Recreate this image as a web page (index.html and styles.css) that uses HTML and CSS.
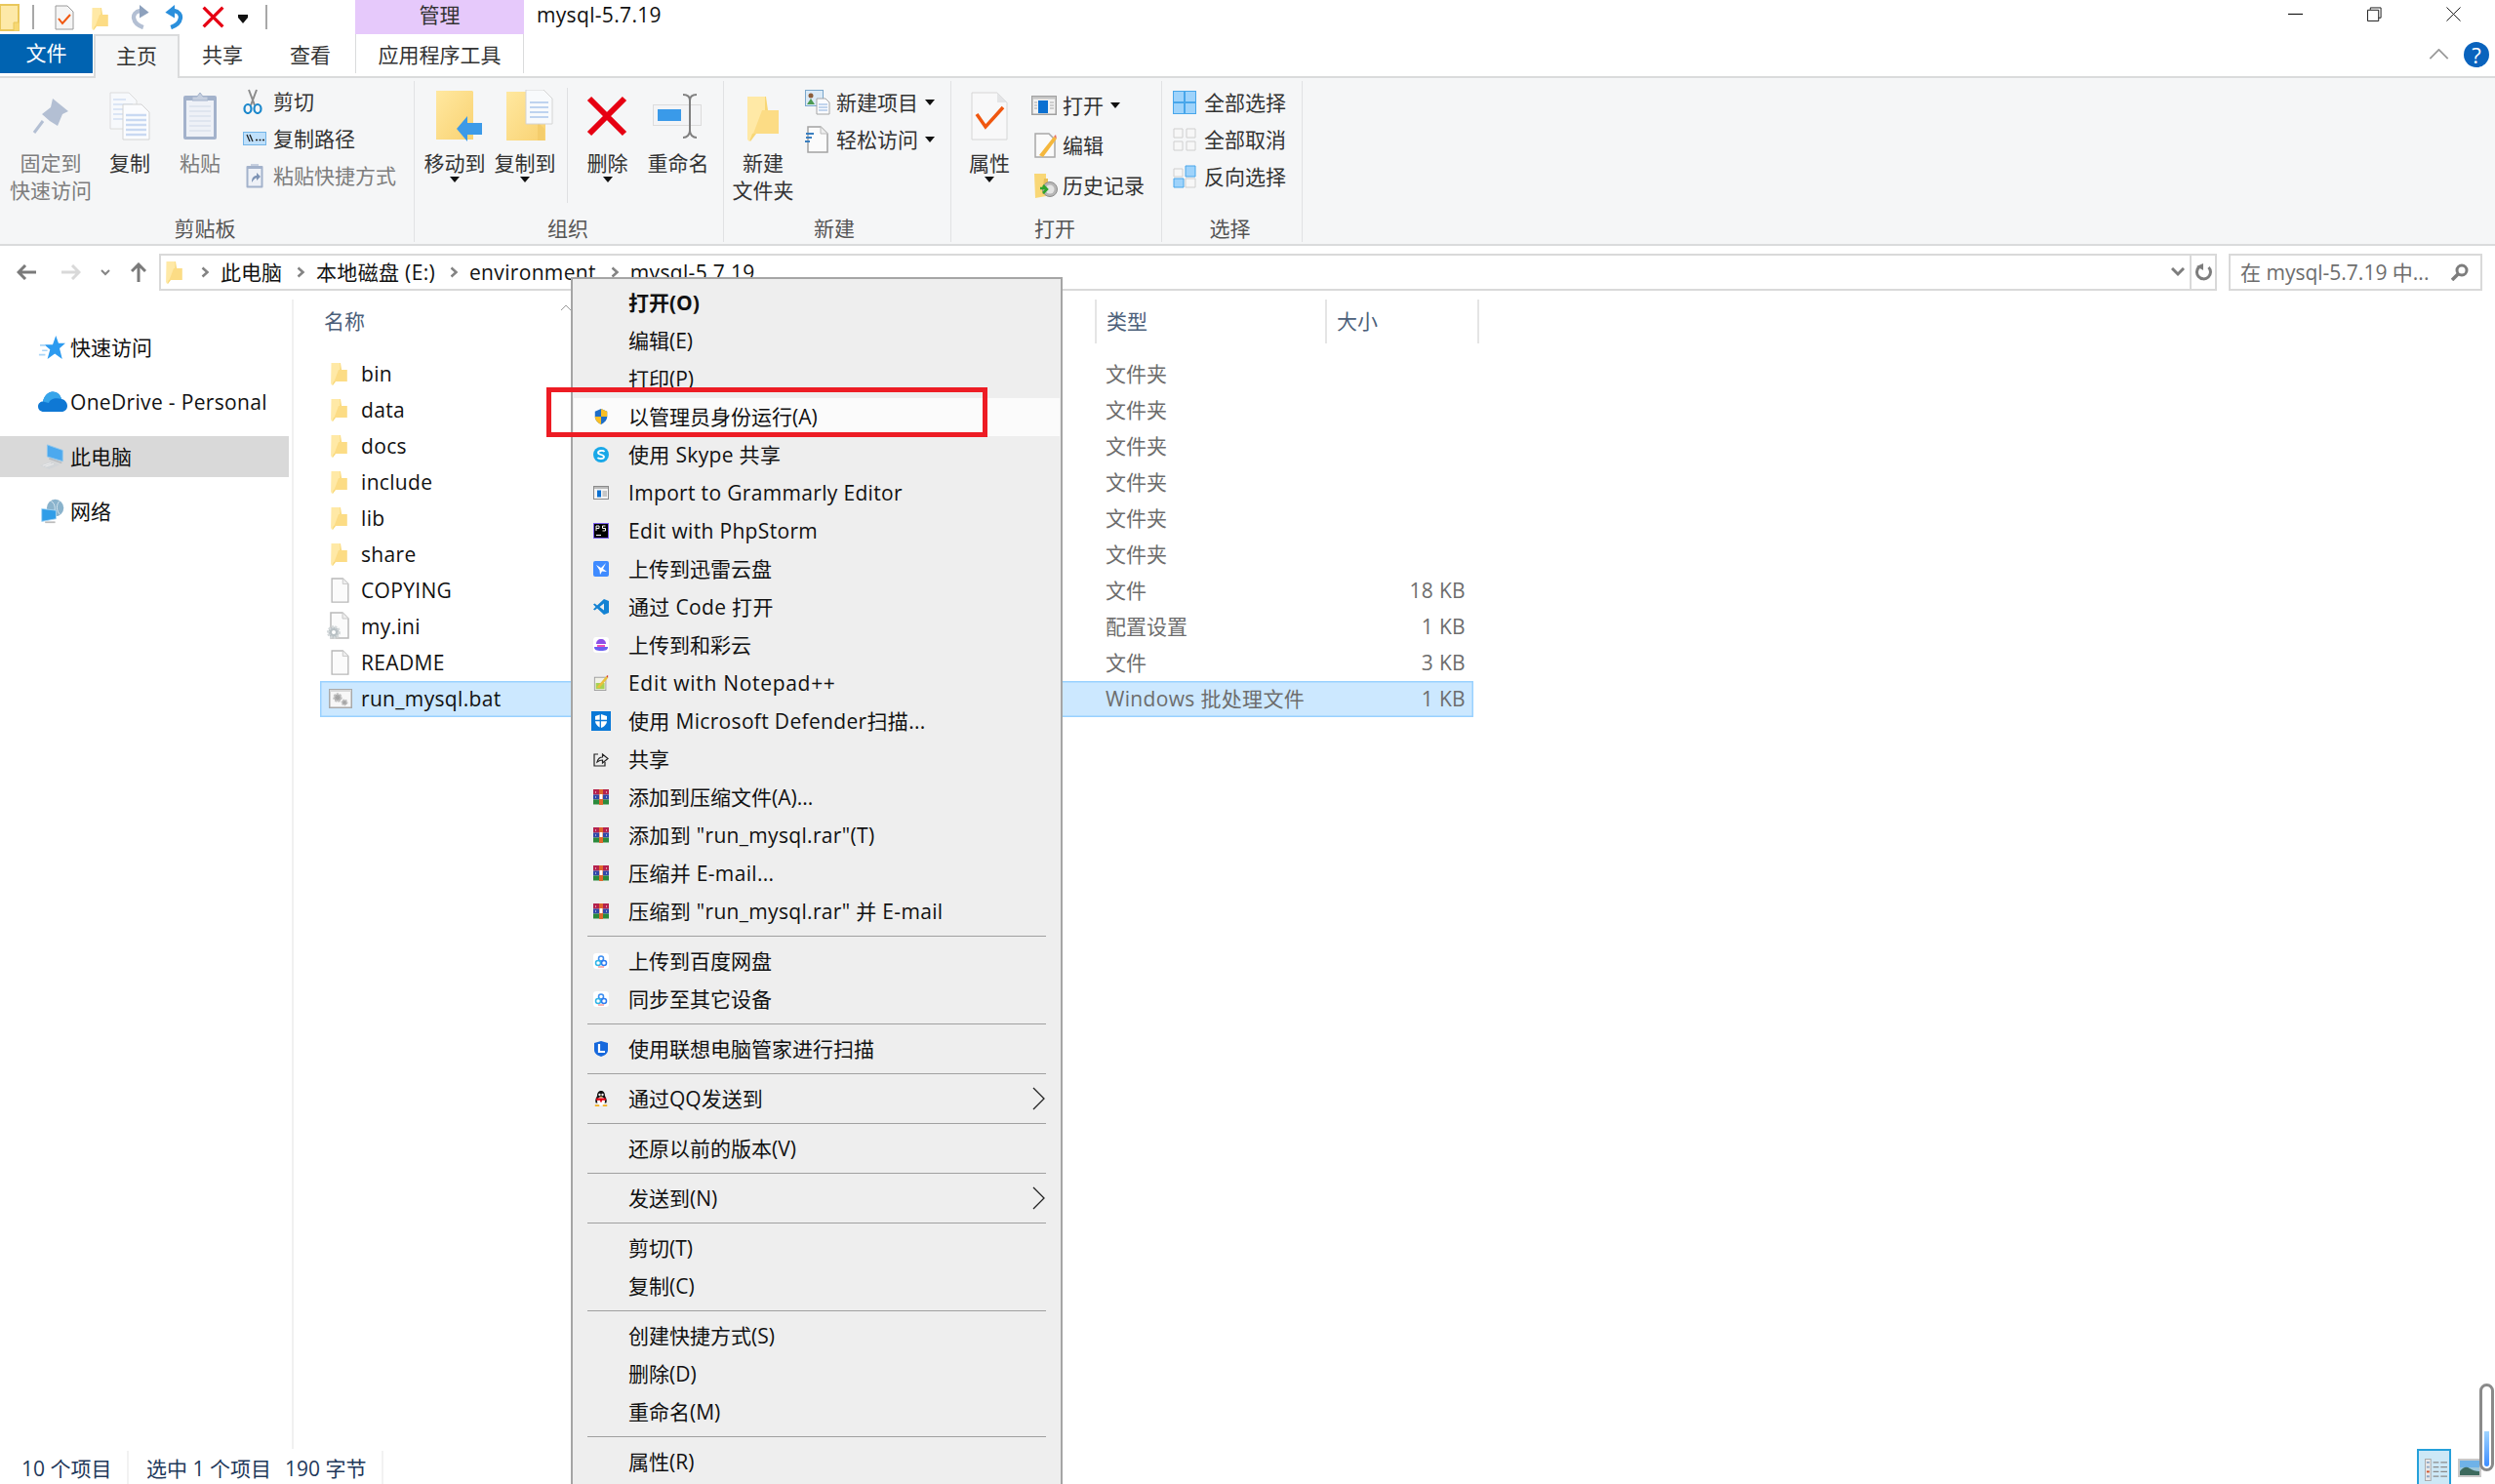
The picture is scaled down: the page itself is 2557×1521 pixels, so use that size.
FILE: index.html
```html
<!DOCTYPE html>
<html lang="zh-CN">
<head>
<meta charset="utf-8">
<title>mysql-5.7.19</title>
<link rel="stylesheet" href="styles.css">
</head>
<body>
<svg class="sprites" aria-hidden="true">
  <defs>
    <linearGradient id="fy" x1="0" y1="0" x2="1" y2="1"><stop offset="0" stop-color="#ffe8a0"/><stop offset="1" stop-color="#f9d272"/></linearGradient>
  </defs>
  <symbol id="folder" viewBox="0 0 17 24"><path d="M1 1H10L11 8H16.500V20H5L2 24 0.500 22Z" fill="#f8d775"/><path d="M0.500 1H9.500V18L3 20 1.500 24 0.500 23Z" fill="#ffe9a6"/><path d="M8 8H16.500V20H3.500Z" fill="#fcdc85"/></symbol>
  <symbol id="doc" viewBox="0 0 20 28"><path d="M1 1H13L19 7V27H1Z" fill="#fbfbfb" stroke="#b9b9b9" stroke-width="1.500"/><path d="M13 1V7H19" fill="#eee" stroke="#c8c8c8"/></symbol>
  <symbol id="docini" viewBox="0 0 24 30"><path d="M5 1H17L23 7V27H5Z" fill="#fbfbfb" stroke="#b9b9b9" stroke-width="1.500"/><path d="M17 1V7H23" fill="#eee" stroke="#c8c8c8"/><circle cx="8" cy="21" r="5.500" fill="#b8c0c4" stroke="#d3d8da" stroke-width="3" stroke-dasharray="2 1.300"/><circle cx="8" cy="21" r="2" fill="#fff"/></symbol>
  <symbol id="bat" viewBox="0 0 24 20"><rect x="0.750" y="0.750" width="22.500" height="18.500" fill="#f7f7f7" stroke="#a9a9a9" stroke-width="1.500"/><rect x="1" y="1" width="22" height="2" fill="#d9d9d9"/><circle cx="9" cy="9" r="3.500" fill="#a5a5a5" stroke="#c0c0c0" stroke-width="2.500" stroke-dasharray="2 1"/><circle cx="16" cy="14" r="2.500" fill="#a5a5a5" stroke="#c0c0c0" stroke-width="2" stroke-dasharray="1.500 1"/></symbol>

  <symbol id="star" viewBox="0 0 26 24"><path d="M16 1 18.500 8H25L19.500 13 22 23 15 18 8 23 10.500 14 5 9.500H13Z" fill="#2d9bf0"/><path d="M1 10H6M3 15H8M0 19H6" stroke="#a9d5f7" stroke-width="1.500"/></symbol>
  <symbol id="cloud" viewBox="0 0 30 22"><path d="M6 21C2 21 0 18.500 0 15.500 0 12.500 2.500 10.500 5 10.500 6 6 9.500 0.500 15 0.500 19.500 0.500 23 3.500 24 8 27.500 8.500 30 11.500 30 15 30 18.500 27.500 21 24 21Z" fill="#0f78d4"/><path d="M5 10.500C6 6 9.500 0.500 15 0.500 19.500 0.500 23 3.500 24 8 18 6 12 8 11 12Z" fill="#37a5ea"/></symbol>
  <symbol id="pc" viewBox="0 0 28 28"><path d="M8 1 25 7V19L8 14Z" fill="#4da9ee" stroke="#8cc6ee"/><path d="M0 24 12 19 22 23 10 28Z" fill="#d2d5d8"/><path d="M10 16 24 21" stroke="#b9bec3" stroke-width="2"/><path d="M3 24 12 21M6 25 15 22" stroke="#eee"/></symbol>
  <symbol id="net" viewBox="0 0 28 30"><circle cx="17" cy="11" r="10" fill="#8ab3cc"/><path d="M12 3C18 6 18 16 13 20M22 3C18 7 18 15 23 19" stroke="#dce9f2" fill="none"/><path d="M1 12 18 14V24L1 27Z" fill="#2f9de8" stroke="#a8d5f3"/><path d="M5 28H17" stroke="#bbb" stroke-width="2"/></symbol>

  <symbol id="pin" viewBox="0 0 38 38"><path d="M21 1 37 14 31 17 26 29 18 24 10 17 19 10Z" fill="#b3bfd3"/><path d="M11 24 2 36" stroke="#b3bfd3" stroke-width="3"/></symbol>
  <symbol id="copy" viewBox="0 0 42 50"><path d="M1 1H20L28 9V38H1Z" fill="#f7f9fc" stroke="#dcdcdc"/><path d="M4 8H17M4 13H24M4 18H24M4 23H24M4 28H24" stroke="#dbe5f5" stroke-width="2"/><path d="M14 13H33L41 21V49H14Z" fill="#fbfcfe" stroke="#d3d3d3"/><path d="M17 24H38M17 29H38M17 34H38M17 39H38M17 44H38" stroke="#c9d9f2" stroke-width="2.500"/></symbol>
  <symbol id="paste" viewBox="0 0 36 50"><rect x="1" y="4" width="34" height="45" rx="2" fill="#a3b2cb"/><rect x="4" y="9" width="28" height="37" fill="#eef1f7"/><path d="M7 15H29M7 20H29M7 25H29M7 30H29M7 35H29M7 40H29" stroke="#dfe5ef" stroke-width="2"/><path d="M10 9V5H15L18 1 21 5H26V9Z" fill="#c6cfdf" stroke="#a3b2cb"/></symbol>
  <symbol id="scissors" viewBox="0 0 20 26"><path d="M6 1 12 17M14 1 8 17" stroke="#8c8c8c" stroke-width="2" fill="none"/><ellipse cx="5" cy="20.500" rx="3.500" ry="4.500" fill="none" stroke="#1c88cc" stroke-width="2.200"/><ellipse cx="15" cy="20.500" rx="3.500" ry="4.500" fill="none" stroke="#1c88cc" stroke-width="2.200"/></symbol>
  <symbol id="cpath" viewBox="0 0 24 14"><rect x="0.500" y="0.500" width="23" height="13" fill="#bfe0fb" stroke="#74b5e8"/><path d="M4 3 7 10M7 3 10 10" stroke="#222" stroke-width="1.300"/><path d="M13 8.500H15M16.500 8.500H18.500M20 8.500H22" stroke="#222" stroke-width="1.600"/></symbol>
  <symbol id="pshort" viewBox="0 0 18 26"><rect x="0.500" y="3" width="17" height="22.500" rx="1" fill="#a3b2cb"/><rect x="2.500" y="6" width="13" height="17.500" fill="#eef1f7"/><path d="M5 3V1H13V3Z" fill="#c6cfdf"/><path d="M6 20C6 15 8 13 11 13V10L15 14 11 18V15.500C9 15.500 8 17 6 20Z" fill="#7d93b5"/></symbol>
  <symbol id="moveto" viewBox="0 0 48 54"><path d="M0 1H37L38 2V51H0Z" fill="url(#fy)"/><path d="M21 40 32 27V34H47V46H32V53Z" fill="#3c9ae8"/></symbol>
  <symbol id="copyto" viewBox="0 0 48 54"><path d="M0 2H26V34H40V52H0Z" fill="url(#fy)"/><path d="M32 33 39 40V52H32Z" fill="#f4cd6c"/><path d="M20 0H38L47 9V35H20Z" fill="#f8fafc" stroke="#d4d4d4"/><path d="M24 13H43M24 18H43M24 23H43M24 28H43" stroke="#bed3ef" stroke-width="2"/></symbol>
  <symbol id="x" viewBox="0 0 42 42"><path d="M3 3 39 39M39 3 3 39" stroke="#e60012" stroke-width="6"/></symbol>
  <symbol id="rename" viewBox="0 0 52 46"><rect x="0.500" y="11.500" width="49" height="21" fill="#f3f4f6" stroke="#dcdcdc"/><rect x="5" y="16" width="24" height="12" fill="#3a9ae9"/><path d="M31 1C35 1 38 3 38 7V38C38 42 35 45 31 45M45 1C41 1 38 3 38 7M38 38C38 42 41 45 45 45" fill="none" stroke="#7f7f7f" stroke-width="2"/></symbol>
  <symbol id="newitem" viewBox="0 0 26 26"><rect x="0.500" y="0.500" width="18" height="16" fill="#dbeaf7" stroke="#7aa7cc"/><circle cx="6" cy="6" r="2.500" fill="#8c5d3a"/><path d="M2 15 6 9 10 15Z" fill="#4c9a52"/><path d="M12 9H21L25 13V25H12Z" fill="#fafbfe" stroke="#a5a5a5"/><path d="M14 15H23M14 18H23M14 21H23" stroke="#89aedc"/></symbol>
  <symbol id="easy" viewBox="0 0 24 28"><path d="M3 1H16L23 8V27H3Z" fill="#fbfbfb" stroke="#a3a3a3" stroke-width="1.500"/><path d="M16 1V8H23" fill="#eee" stroke="#bbb"/><path d="M1 8H9M1 12H7M0 16H5" stroke="#3a7fc0" stroke-width="2"/></symbol>
  <symbol id="props" viewBox="0 0 38 50"><path d="M1 1H27L37 11V49H1Z" fill="#f8f8f9" stroke="#d6d6d6"/><path d="M27 1V11H37Z" fill="#e3e4e6"/><path d="M6 23 15 36 33 16" fill="none" stroke="#f0570f" stroke-width="3.500"/></symbol>
  <symbol id="openw" viewBox="0 0 26 20"><rect x="0.750" y="0.750" width="24.500" height="18.500" fill="#f2f2f2" stroke="#a0a0a0" stroke-width="1.500"/><rect x="1" y="1" width="24" height="2.500" fill="#c4c4c4"/><rect x="7" y="5" width="10" height="13" fill="#0b70d1"/><path d="M3 7H6M3 10H6M3 13H6M19 7H23M19 10H23M19 13H23" stroke="#a8a8a8"/></symbol>
  <symbol id="edit" viewBox="0 0 24 26"><path d="M1 1H15L21 7V25H1Z" fill="#fafafa" stroke="#a8a8a8" stroke-width="1.500"/><path d="M5 23 20 4 23 6 9 25Z" fill="#f4b73d"/><path d="M20 4 23 6 22 2Z" fill="#e86f5a"/></symbol>
  <symbol id="history" viewBox="0 0 24 26"><path d="M0 1H12V24L1 26Z" fill="#f9d776"/><path d="M10 6H14V22H8Z" fill="#e8c05a"/><circle cx="16" cy="17" r="7.500" fill="#b6b6b6" stroke="#8d8d8d"/><circle cx="16" cy="17" r="4.500" fill="#e3e3e3"/><path d="M6 16H13M9 13 13 17 9 21" fill="none" stroke="#2fa32e" stroke-width="2.500"/></symbol>
  <symbol id="selall" viewBox="0 0 24 24"><rect width="24" height="24" fill="#48a6ea"/><path d="M1 1H11V11H1ZM13 1H23V11H13ZM1 13H11V23H1ZM13 13H23V23H13Z" fill="#9ed3fb"/></symbol>
  <symbol id="selnone" viewBox="0 0 24 24"><path d="M1 1H10V10H1ZM14 1H23V10H14ZM1 14H10V23H1ZM14 14H23V23H14Z" fill="#f7f7f7" stroke="#cfcfcf"/></symbol>
  <symbol id="selinv" viewBox="0 0 24 24"><path d="M1 4H10V12H1ZM13 14H23V23H13Z" fill="#f7f7f7" stroke="#cfcfcf"/><path d="M13 1H23V12H13ZM1 14H11V23H1Z" fill="#9ed3fb" stroke="#48a6ea"/></symbol>

  <symbol id="qfolder" viewBox="0 0 20 28"><rect x="0" y="1" width="19" height="26" fill="#fde9a8" stroke="#e9c75b" stroke-width="2"/><path d="M14 19H20V28H14Z" fill="#f7d873" stroke="#e9c75b"/></symbol>
  <symbol id="qdoc" viewBox="0 0 20 26"><path d="M1 1H13L19 7V25H1Z" fill="#f5f5f5" stroke="#9a9a9a"/><path d="M4 14 8 19 16 10" fill="none" stroke="#f0570f" stroke-width="2"/></symbol>
  <symbol id="redo" viewBox="0 0 22 26"><path d="M15 24C3 20 1 8 12 6" fill="none" stroke="#b3bfd3" stroke-width="4.500"/><path d="M21 8 11 0V14Z" fill="#8da1bd"/></symbol>
  <symbol id="undo" viewBox="0 0 22 26"><path d="M7 24C19 20 21 8 10 6" fill="none" stroke="#2a8fdc" stroke-width="4.500"/><path d="M1 8 11 0V14Z" fill="#2a8fdc"/></symbol>

  <symbol id="m-shield" viewBox="0 0 16 18"><path d="M8 0 15 3V9C15 13 12 16 8 18 4 16 1 13 1 9V3Z" fill="#1e6ec8"/><path d="M8 0 15 3V9H8ZM8 9V18C4 16 1 13 1 9Z" fill="#fbbf24"/></symbol>
  <symbol id="m-gram" viewBox="0 0 16 14"><rect x="0.500" y="0.500" width="15" height="13" fill="#f4f4f4" stroke="#8a8a8a"/><rect x="1" y="1" width="14" height="2" fill="#bbb"/><rect x="4" y="4.500" width="4" height="7" fill="#0b70d1"/><path d="M9.500 6H14M9.500 8H14M9.500 10H14" stroke="#999"/></symbol>
  <symbol id="m-xl" viewBox="0 0 16 16"><rect width="16" height="16" rx="2" fill="#3f8bff"/><path d="M3 4 8 7 13 2 10 8 14 11 9 10.500 7 14 6.500 9.500Z" fill="#fff"/></symbol>
  <symbol id="m-code" viewBox="0 0 16 16"><path d="M11 0 16 2V14L11 16 4 9.500 1.500 11.500 0 10.500 2.500 8 0 5.500 1.500 4.500 4 6.500Z" fill="#1382d3"/><path d="M11 4.500 6.500 8 11 11.500Z" fill="#eee"/></symbol>
  <symbol id="m-hcy" viewBox="0 0 16 16"><rect width="16" height="16" rx="3" fill="#fff"/><path d="M3 7C3 4 5 2 8 2S13 4 13 7Z" fill="#8b4fe8"/><path d="M1 10H15C15 13 13 14 8 14S1 13 1 10Z" fill="#6a5ef0"/><path d="M4 8H12V10H4Z" fill="#f04fb8"/></symbol>
  <symbol id="m-npp" viewBox="0 0 16 18"><rect x="0.500" y="2.500" width="13" height="15" fill="#f1f1e8" stroke="#9a9a9a"/><path d="M2 9H12V16H2Z" fill="#a7d253"/><path d="M3 14 14 1 16 3 6 15Z" fill="#e9c13d"/><path d="M14 1 16 3 16 0Z" fill="#d2332c"/></symbol>
  <symbol id="m-def" viewBox="0 0 20 20"><rect width="20" height="20" fill="#0a78d7"/><path d="M10 3 16 5V10C16 13 13 16 10 17 7 16 4 13 4 10V5Z" fill="#fff"/><path d="M9.300 3V17M4 9.500H16" stroke="#0a78d7" stroke-width="1.300"/></symbol>
  <symbol id="m-share" viewBox="0 0 16 16"><path d="M5 3H1V15H12V11" fill="none" stroke="#222" stroke-width="1.200"/><path d="M4 11C5 7 7 6 9.500 6V3L15 7.500 9.500 12V9C7.500 9 6 9.500 4 11Z" fill="none" stroke="#222" stroke-width="1.200"/></symbol>
  <symbol id="m-rar" viewBox="0 0 16 16"><rect x="0" y="0" width="16" height="5.500" fill="#b5214c"/><rect x="0" y="5.500" width="16" height="5" fill="#3048a8"/><rect x="0" y="10.500" width="16" height="5" fill="#2a8a3c"/><rect x="6" y="0" width="4" height="16" fill="#e0672c"/><rect x="6.500" y="5" width="3" height="5" fill="#fff"/><path d="M2 3H3M13 3H14M2 8H3M13 8H14" stroke="#fff"/></symbol>
  <symbol id="m-bd" viewBox="0 0 16 16"><rect width="16" height="16" rx="3" fill="#fff"/><circle cx="8" cy="5.500" r="2.500" fill="none" stroke="#3d8ef0" stroke-width="1.500"/><circle cx="5" cy="10" r="2.500" fill="none" stroke="#2fb5e8" stroke-width="1.500"/><circle cx="11" cy="10" r="2.500" fill="none" stroke="#2e7df0" stroke-width="1.500"/><path d="M5 14H11" stroke="#f26a6a"/></symbol>
  <symbol id="m-len" viewBox="0 0 14 16"><path d="M7 0 14 2V9C14 13 10 15 7 16 4 15 0 13 0 9V2Z" fill="#1668dc"/><path d="M5 3V11H11" fill="none" stroke="#fff" stroke-width="2.200"/></symbol>
  <symbol id="m-qq" viewBox="0 0 16 18"><path d="M8 0C11.500 0 12.500 3 12.500 6 14.500 9 15 12 14 14H2C1 12 1.500 9 3.500 6 3.500 3 4.500 0 8 0Z" fill="#111"/><ellipse cx="8" cy="12" rx="4.500" ry="5" fill="#fff"/><circle cx="6.300" cy="4.500" r="1.300" fill="#fff"/><circle cx="9.700" cy="4.500" r="1.300" fill="#fff"/><path d="M6.500 6.500H9.500L8 8Z" fill="#f5b01c"/><path d="M2.500 8.500H13.500V11H9V13H7V11H2.500Z" fill="#e60012"/><path d="M1 16H6V18H1ZM10 16H15V18H10Z" fill="#f5b01c"/></symbol>
  <symbol id="m-arrow" viewBox="0 0 13 24"><path d="M1 1 12 12 1 23" fill="none" stroke="#222" stroke-width="1.300"/></symbol>
  <symbol id="chev" viewBox="0 0 9 12"><path d="M1.500 1.500 6.500 6 1.500 10.500" fill="none" stroke="#838383" stroke-width="2.500"/></symbol>
</svg>

<div class="window">
  <header class="titlebar">
    <div class="qat">
      <svg class="q-folder"><use href="#qfolder"/></svg>
      <span class="q-sep q-sep-a"></span>
      <svg class="q-doc"><use href="#qdoc"/></svg>
      <svg class="q-fold2"><use href="#folder"/></svg>
      <svg class="q-redo"><use href="#redo"/></svg>
      <svg class="q-undo"><use href="#undo"/></svg>
      <svg class="q-x"><use href="#x"/></svg>
      <span class="q-drop"></span>
      <span class="q-sep q-sep-b"></span>
    </div>
    <div class="ctx-tab">管理</div>
    <div class="win-title lat">mysql-5.7.19</div>
    <div class="win-controls">
      <svg class="wc" viewBox="0 0 16 16"><path d="M0 8H16" stroke="#111" stroke-width="1.200"/></svg>
      <svg class="wc" viewBox="0 0 16 16"><path d="M3.500 3V1H15V12H12.500M0.500 3.500H12.500V15.500H0.500Z" fill="none" stroke="#111"/></svg>
      <svg class="wc" viewBox="0 0 16 16"><path d="M0.500 0.500 15.500 15.500M15.500 0.500 0.500 15.500" stroke="#111"/></svg>
    </div>
  </header>

  <nav class="tabs">
    <div class="tab tab-file">文件</div>
    <div class="tab tab-home">主页</div>
    <div class="tab tab-share">共享</div>
    <div class="tab tab-view">查看</div>
    <div class="tab tab-app">应用程序工具</div>
    <div class="tabs-right">
      <svg class="collapse" viewBox="0 0 22 12"><path d="M1 11 11 1 21 11" fill="none" stroke="#9a9a9a" stroke-width="2"/></svg>
      <span class="help">?</span>
    </div>
  </nav>

  <section class="ribbon">
    <div class="group g1">
      <div class="group-body">
        <div class="big w84 off"><div class="big-icon"><svg class="i-pin"><use href="#pin"/></svg></div><span>固定到</span><span>快速访问</span></div>
        <div class="big w78"><div class="big-icon"><svg class="i-copy"><use href="#copy"/></svg></div><span>复制</span></div>
        <div class="big w66 off"><div class="big-icon"><svg class="i-paste"><use href="#paste"/></svg></div><span>粘贴</span></div>
        <div class="smalls s-clip">
          <div class="small"><span class="slot"><svg class="i-sc"><use href="#scissors"/></svg></span>剪切</div>
          <div class="small"><span class="slot"><svg class="i-cp"><use href="#cpath"/></svg></span>复制路径</div>
          <div class="small off"><span class="slot"><svg class="i-ps"><use href="#pshort"/></svg></span>粘贴快捷方式</div>
        </div>
      </div>
      <div class="group-label">剪贴板</div>
    </div>

    <div class="group g2">
      <div class="group-body">
        <div class="big w78"><div class="big-icon"><svg class="i-move"><use href="#moveto"/></svg></div><span>移动到</span><i class="caret"></i></div>
        <div class="big w66"><div class="big-icon"><svg class="i-move"><use href="#copyto"/></svg></div><span>复制到</span><i class="caret"></i></div>
        <div class="vsep"></div>
        <div class="big w81"><div class="big-icon"><svg class="i-del"><use href="#x"/></svg></div><span>删除</span><i class="caret"></i></div>
        <div class="big w64"><div class="big-icon"><svg class="i-ren"><use href="#rename"/></svg></div><span>重命名</span></div>
      </div>
      <div class="group-label">组织</div>
    </div>

    <div class="group g3">
      <div class="group-body">
        <div class="big w74"><div class="big-icon"><svg class="i-newf"><use href="#folder"/></svg></div><span>新建</span><span>文件夹</span></div>
        <div class="smalls s-new">
          <div class="small"><span class="slot"><svg class="i-new"><use href="#newitem"/></svg></span>新建项目<i class="caret inline"></i></div>
          <div class="small"><span class="slot"><svg class="i-easy"><use href="#easy"/></svg></span>轻松访问<i class="caret inline"></i></div>
        </div>
      </div>
      <div class="group-label">新建</div>
    </div>

    <div class="group g4">
      <div class="group-body">
        <div class="big w78"><div class="big-icon"><svg class="i-props"><use href="#props"/></svg></div><span>属性</span><i class="caret"></i></div>
        <div class="smalls s-open">
          <div class="small"><span class="slot"><svg class="i-open"><use href="#openw"/></svg></span>打开<i class="caret inline"></i></div>
          <div class="small"><span class="slot"><svg class="i-edit"><use href="#edit"/></svg></span>编辑</div>
          <div class="small"><span class="slot"><svg class="i-edit"><use href="#history"/></svg></span>历史记录</div>
        </div>
      </div>
      <div class="group-label">打开</div>
    </div>

    <div class="group g5">
      <div class="group-body">
        <div class="smalls s-sel">
          <div class="small"><span class="slot"><svg class="i-sel"><use href="#selall"/></svg></span>全部选择</div>
          <div class="small"><span class="slot"><svg class="i-sel"><use href="#selnone"/></svg></span>全部取消</div>
          <div class="small"><span class="slot"><svg class="i-sel"><use href="#selinv"/></svg></span>反向选择</div>
        </div>
      </div>
      <div class="group-label">选择</div>
    </div>
  </section>

  <section class="addressbar">
    <div class="nav-arrows">
      <svg class="na-back" viewBox="0 0 20 16"><path d="M9 1 2 8 9 15M2 8H20" fill="none" stroke="#7a7a7a" stroke-width="3"/></svg>
      <svg class="na-fwd" viewBox="0 0 20 16"><path d="M11 1 18 8 11 15M18 8H0" fill="none" stroke="#d9d9d9" stroke-width="3"/></svg>
      <svg class="na-down" viewBox="0 0 10 7"><path d="M1 1 5 5 9 1" fill="none" stroke="#858585" stroke-width="2"/></svg>
      <svg class="na-up" viewBox="0 0 16 20"><path d="M1 9 8 2 15 9M8 2V20" fill="none" stroke="#7a7a7a" stroke-width="3"/></svg>
    </div>
    <div class="addr-box">
      <svg class="addr-folder"><use href="#folder"/></svg>
      <svg class="crumb-chev"><use href="#chev"/></svg>
      <span class="crumb">此电脑</span>
      <svg class="crumb-chev"><use href="#chev"/></svg>
      <span class="crumb lat">本地磁盘 (E:)</span>
      <svg class="crumb-chev"><use href="#chev"/></svg>
      <span class="crumb lat">environment</span>
      <svg class="crumb-chev"><use href="#chev"/></svg>
      <span class="crumb lat">mysql-5.7.19</span>
      <svg class="addr-drop" viewBox="0 0 14 10"><path d="M1 1 7 7 13 1" fill="none" stroke="#7d7d7d" stroke-width="3"/></svg>
      <div class="addr-refresh"><svg viewBox="0 0 18 18"><path d="M5 3.500A7 7 0 1 0 14.500 4" fill="none" stroke="#7d7d7d" stroke-width="3"/><path d="M9 0V7L2 3Z" fill="#7d7d7d"/></svg></div>
    </div>
    <div class="search-box">
      <span>在 mysql-5.7.19 中...</span>
      <svg class="search-ic" viewBox="0 0 18 18"><circle cx="11" cy="7" r="5" fill="none" stroke="#7d7d7d" stroke-width="3"/><path d="M7 11 1 17" stroke="#7d7d7d" stroke-width="3.500"/></svg>
    </div>
  </section>

  <main class="content">
    <aside class="nav">
      <div class="nav-item"><svg class="nav-ic"><use href="#star"/></svg>快速访问</div>
      <div class="nav-item lat"><svg class="nav-ic"><use href="#cloud"/></svg>OneDrive - Personal</div>
      <div class="nav-item nav-sel"><svg class="nav-ic"><use href="#pc"/></svg>此电脑</div>
      <div class="nav-item"><svg class="nav-ic"><use href="#net"/></svg>网络</div>
    </aside>
    <div class="list">
      <div class="list-head">
        <div class="h-name">名称<svg class="sort" viewBox="0 0 12 7"><path d="M1 6 6 1 11 6" fill="none" stroke="#9a9a9a"/></svg></div>
        <div class="h-type">类型</div>
        <div class="h-size">大小</div>
      </div>
      <div class="rows">
        <div class="row"><span class="ric"><svg class="f-ic"><use href="#folder"/></svg></span><span class="nm">bin</span><span class="ty">文件夹</span><span class="sz"></span></div>
        <div class="row"><span class="ric"><svg class="f-ic"><use href="#folder"/></svg></span><span class="nm">data</span><span class="ty">文件夹</span><span class="sz"></span></div>
        <div class="row"><span class="ric"><svg class="f-ic"><use href="#folder"/></svg></span><span class="nm">docs</span><span class="ty">文件夹</span><span class="sz"></span></div>
        <div class="row"><span class="ric"><svg class="f-ic"><use href="#folder"/></svg></span><span class="nm">include</span><span class="ty">文件夹</span><span class="sz"></span></div>
        <div class="row"><span class="ric"><svg class="f-ic"><use href="#folder"/></svg></span><span class="nm">lib</span><span class="ty">文件夹</span><span class="sz"></span></div>
        <div class="row"><span class="ric"><svg class="f-ic"><use href="#folder"/></svg></span><span class="nm">share</span><span class="ty">文件夹</span><span class="sz"></span></div>
        <div class="row"><span class="ric"><svg class="d-ic"><use href="#doc"/></svg></span><span class="nm">COPYING</span><span class="ty">文件</span><span class="sz">18 KB</span></div>
        <div class="row"><span class="ric"><svg class="ini-ic"><use href="#docini"/></svg></span><span class="nm">my.ini</span><span class="ty">配置设置</span><span class="sz">1 KB</span></div>
        <div class="row"><span class="ric"><svg class="d-ic"><use href="#doc"/></svg></span><span class="nm">README</span><span class="ty">文件</span><span class="sz">3 KB</span></div>
        <div class="row row-sel"><span class="ric"><svg class="bat-ic"><use href="#bat"/></svg></span><span class="nm">run_mysql.bat</span><span class="ty lat">Windows 批处理文件</span><span class="sz">1 KB</span></div>
      </div>
    </div>
  </main>

  <footer class="status">
    <span class="st-a">10 个项目</span>
    <span class="st-b">选中 1 个项目</span>
    <span class="st-c">190 字节</span>
    <div class="views">
      <div class="view-details">
        <svg viewBox="0 0 24 24"><rect x="0.500" y="0.500" width="6" height="23" fill="#e8e8e8" stroke="#aaa"/><path d="M2 4H5M2 9H5M2 19H5" stroke="#8aa5c4" stroke-width="2"/><path d="M2 14H5" stroke="#d2552c" stroke-width="2"/><path d="M9 4H15M17 4H24M9 9H15M17 9H24M9 14H15M17 14H24M9 19H15M17 19H24" stroke="#8b8b8b" stroke-width="1.300"/></svg>
      </div>
      <div class="view-large">
        <svg viewBox="0 0 24 19"><rect width="24" height="19" fill="#c9c9c9"/><rect x="2" y="2" width="20" height="8" fill="#6fb2e8"/><rect x="2" y="9" width="20" height="8" fill="#9cc7dc"/><path d="M2 13C6 8 9 8 12 10 15 12 18 13 22 13V17H2Z" fill="#3d6a5e"/></svg>
      </div>
    </div>
  </footer>
</div>

<div class="menu">
  <div class="mi mi-b"><span class="ms"></span>打开(O)</div>
  <div class="mi"><span class="ms"></span>编辑(E)</div>
  <div class="mi"><span class="ms"></span>打印(P)</div>
  <div class="mi mi-hot"><span class="ms"><svg class="mic16"><use href="#m-shield"/></svg></span>以管理员身份运行(A)</div>
  <div class="mi lat"><span class="ms"><svg class="mic16" viewBox="0 0 16 16"><circle cx="8" cy="8" r="8" fill="#19a8e8"/><path d="M11.500 5C10.500 3.500 5 3.500 5 6 5 8.500 11 7.500 11 10.200 11 12.500 5.500 12.500 4.500 11" fill="none" stroke="#fff" stroke-width="1.800"/></svg></span>使用 Skype 共享</div>
  <div class="mi lat"><span class="ms"><svg class="mic16"><use href="#m-gram"/></svg></span>Import to Grammarly Editor</div>
  <div class="mi lat"><span class="ms"><svg class="mic16" viewBox="0 0 16 16"><rect x="0.500" y="0.500" width="15" height="15" fill="#000" stroke="#7a5cf0"/><path d="M3 8V3H6V5.500H3M12.500 3H9.500V5.500H12.500V8H9.500" fill="none" stroke="#fff"/><path d="M3 12.500H8" stroke="#fff"/></svg></span>Edit with PhpStorm</div>
  <div class="mi"><span class="ms"><svg class="mic16"><use href="#m-xl"/></svg></span>上传到迅雷云盘</div>
  <div class="mi lat"><span class="ms"><svg class="mic16"><use href="#m-code"/></svg></span>通过 Code 打开</div>
  <div class="mi"><span class="ms"><svg class="mic16"><use href="#m-hcy"/></svg></span>上传到和彩云</div>
  <div class="mi npp"><span class="ms"><svg class="mic16"><use href="#m-npp"/></svg></span>Edit with Notepad++</div>
  <div class="mi lat"><span class="ms"><svg class="mic20"><use href="#m-def"/></svg></span>使用 Microsoft Defender扫描...</div>
  <div class="mi"><span class="ms"><svg class="mic16"><use href="#m-share"/></svg></span>共享</div>
  <div class="mi"><span class="ms"><svg class="mic16"><use href="#m-rar"/></svg></span>添加到压缩文件(A)...</div>
  <div class="mi lat"><span class="ms"><svg class="mic16"><use href="#m-rar"/></svg></span>添加到 "run_mysql.rar"(T)</div>
  <div class="mi lat"><span class="ms"><svg class="mic16"><use href="#m-rar"/></svg></span>压缩并 E-mail...</div>
  <div class="mi lat"><span class="ms"><svg class="mic16"><use href="#m-rar"/></svg></span>压缩到 "run_mysql.rar" 并 E-mail</div>
  <div class="msep"></div>
  <div class="mi"><span class="ms"><svg class="mic16"><use href="#m-bd"/></svg></span>上传到百度网盘</div>
  <div class="mi"><span class="ms"><svg class="mic16"><use href="#m-bd"/></svg></span>同步至其它设备</div>
  <div class="msep"></div>
  <div class="mi"><span class="ms"><svg class="mic16"><use href="#m-len"/></svg></span>使用联想电脑管家进行扫描</div>
  <div class="msep"></div>
  <div class="mi"><span class="ms"><svg class="mic16"><use href="#m-qq"/></svg></span>通过QQ发送到<svg class="marrow"><use href="#m-arrow"/></svg></div>
  <div class="msep"></div>
  <div class="mi"><span class="ms"></span>还原以前的版本(V)</div>
  <div class="msep"></div>
  <div class="mi"><span class="ms"></span>发送到(N)<svg class="marrow"><use href="#m-arrow"/></svg></div>
  <div class="msep"></div>
  <div class="mi"><span class="ms"></span>剪切(T)</div>
  <div class="mi"><span class="ms"></span>复制(C)</div>
  <div class="msep"></div>
  <div class="mi"><span class="ms"></span>创建快捷方式(S)</div>
  <div class="mi"><span class="ms"></span>删除(D)</div>
  <div class="mi"><span class="ms"></span>重命名(M)</div>
  <div class="msep"></div>
  <div class="mi"><span class="ms"></span>属性(R)</div>
</div>

<div class="redbox"></div>
<div class="gauge"><div class="gauge-fill"></div></div>
</body>
</html>
```

FILE: styles.css
```css
* { box-sizing: border-box; }
html, body { margin: 0; padding: 0; }
body {
  width: 2557px;
  height: 1521px;
  overflow: hidden;
  position: relative;
  background: #fff;
  color: #111;
  font-family: "Open Sans", "Noto Sans CJK SC", sans-serif;
  font-size: 21px;
  line-height: 28px;
}
svg { display: block; flex: none; }
.sprites { position: absolute; width: 0; height: 0; }
.lat { letter-spacing: 0.33px; }

.window { display: flex; flex-direction: column; height: 1521px; }

/* title bar */
.titlebar { display: flex; height: 35px; align-items: stretch; }
.qat { display: flex; width: 364px; align-items: center; }
.q-folder { width: 20px; height: 28px; }
.q-sep { width: 2px; height: 25px; background: #a8a8a8; }
.q-sep-a { margin-left: 13px; }
.q-doc { width: 20px; height: 26px; margin-left: 21px; }
.q-fold2 { width: 17px; height: 24px; margin-left: 18px; margin-top: 3px; }
.q-redo { width: 22px; height: 25px; margin-left: 21px; }
.q-undo { width: 22px; height: 25px; margin-left: 14px; }
.q-x { width: 23px; height: 23px; margin-left: 17px; }
.q-drop { width: 0; height: 0; margin-left: 14px; margin-top: 6px; border-left: 5px solid transparent; border-right: 5px solid transparent; border-top: 6px solid #111; box-shadow: 0 -3px 0 0 #111; }
.q-sep-b { margin-left: 18px; }
.ctx-tab { width: 173px; background: #e6c9fb; text-align: center; line-height: 30px; color: #333; }
.win-title { margin-left: 13px; line-height: 30px; color: #111; }
.win-controls { display: flex; margin-left: auto; padding-right: 35px; gap: 66px; padding-top: 7px; }
.wc { width: 15px; height: 15px; }

/* tabs */
.tabs { display: flex; height: 43px; }
.tab { text-align: center; line-height: 42px; color: #333; }
.tab-file { width: 95px; height: 40px; line-height: 38px; background: #0063b1; color: #fff; }
.tab-home { width: 88px; height: 45px; background: #f5f6f7; border: 2px solid #dadbdc; border-bottom: 0; position: relative; z-index: 1; margin-left: 1px; line-height: 40px; }
.tab-share { width: 88px; }
.tab-view { width: 92px; }
.tab-app { width: 173px; height: 40px; border-left: 1px solid #dadbdc; border-right: 1px solid #dadbdc; }
.tabs-right { display: flex; margin-left: auto; align-items: center; padding-right: 6px; gap: 15px; padding-bottom: 2px; }
.collapse { width: 21px; height: 11px; }
.help { width: 26px; height: 26px; border-radius: 50%; background: #0a63bd; color: #fff; text-align: center; line-height: 26px; font-size: 22px; }

/* ribbon */
.ribbon { display: flex; height: 174px; background: #f5f6f7; border-top: 2px solid #dadbdc; border-bottom: 2px solid #dadbdc; padding-top: 3px; }
.group { display: flex; flex-direction: column; height: 165px; border-right: 1px solid #e1e2e4; }
.g1 { width: 425px; padding-left: 10px; }
.g2 { width: 317px; padding-left: 2px; }
.g3 { width: 233px; padding-left: 3px; }
.g4 { width: 216px; }
.g5 { width: 144px; padding-left: 11px; }
.group-body { display: flex; height: 137px; }
.group-label { height: 28px; text-align: center; color: #555; margin-left: -10px; padding-right: 4px; }
.g2 .group-label { margin-left: -2px; padding-right: 2px; }
.g3 .group-label { margin-left: -3px; padding-right: 6px; }
.g4 .group-label { margin-left: 0; padding-right: 3px; }
.g5 .group-label { margin-left: -11px; padding-right: 4px; }
.big { display: flex; flex-direction: column; align-items: center; flex: none; color: #333; }
.big.off { color: #7d7d7d; }
.w84 { width: 84px; }
.w81 { width: 81px; }
.w78 { width: 78px; }
.w74 { width: 74px; }
.w66 { width: 66px; }
.w64 { width: 64px; }
.big-icon { height: 70px; display: flex; align-items: flex-start; justify-content: center; width: 100%; }
.i-pin { width: 38px; height: 38px; margin-top: 17px; }
.i-copy { width: 42px; height: 50px; margin-top: 11px; }
.i-paste { width: 36px; height: 50px; margin-top: 11px; }
.i-move { width: 48px; height: 54px; margin-top: 9px; margin-left: 9px; }
.i-del { width: 42px; height: 42px; margin-top: 15px; margin-right: 2px; }
.i-ren { width: 52px; height: 46px; margin-top: 13px; }
.i-newf { width: 34px; height: 48px; margin-top: 14px; }
.i-props { width: 38px; height: 50px; margin-top: 11px; }
.caret { display: block; width: 0; height: 0; margin-top: 0; border-left: 5px solid transparent; border-right: 5px solid transparent; border-top: 6px solid #111; }
.caret.inline { margin-left: 7px; }
.vsep { width: 1px; height: 118px; margin: 7px 0 0 10px; background: #dfe0e2; }
.smalls { display: flex; flex-direction: column; flex: none; }
.small { display: flex; align-items: center; height: 38px; color: #333; white-space: nowrap; }
.small.off { color: #7d7d7d; }
.slot { width: 31px; display: flex; align-items: center; flex: none; }
.s-clip { margin-left: 11px; padding-top: 2px; }
.s-new { margin-left: 6px; padding-top: 3px; }
.s-new .slot, .s-open .slot, .s-sel .slot { width: 32px; }
.s-open { margin-left: 4px; padding-top: 4px; }
.s-open .small { height: 41px; }
.s-sel { padding-top: 3px; }
.i-sc { width: 20px; height: 26px; }
.i-cp { width: 24px; height: 14px; }
.i-ps { width: 18px; height: 26px; margin-left: 3px; }
.i-new { width: 26px; height: 26px; }
.i-easy { width: 24px; height: 28px; }
.i-open { width: 26px; height: 20px; }
.i-edit { width: 24px; height: 26px; margin-left: 3px; }
.i-sel { width: 24px; height: 24px; }

/* address bar */
.addressbar { display: flex; height: 55px; padding-top: 8px; align-items: flex-start; }
.nav-arrows { display: flex; align-items: center; width: 163px; height: 38px; padding-left: 17px; }
.na-back { width: 20px; height: 16px; }
.na-fwd { width: 20px; height: 16px; margin-left: 26px; }
.na-down { width: 10px; height: 7px; margin-left: 20px; }
.na-up { width: 16px; height: 20px; margin-left: 21px; }
.addr-box { display: flex; align-items: center; width: 2109px; height: 38px; border: 2px solid #d9d9d9; padding-left: 5px; }
.addr-folder { width: 17px; height: 24px; margin-right: 4px; }
.crumb-chev { width: 9px; height: 12px; margin-left: 15px; margin-right: 11px; }
.crumb { white-space: nowrap; }
.addr-drop { width: 14px; height: 10px; margin-left: auto; margin-right: 5px; }
.addr-refresh { width: 26px; height: 34px; border-left: 2px solid #d9d9d9; display: flex; align-items: center; justify-content: center; }
.addr-refresh svg { width: 18px; height: 18px; }
.search-box { display: flex; align-items: center; width: 260px; height: 38px; margin-left: 12px; border: 2px solid #d9d9d9; padding-left: 10px; color: #6d6d6d; }
.search-ic { width: 18px; height: 18px; margin-left: auto; margin-right: 12px; }

/* content */
.content { display: flex; height: 1178px; }
.nav { width: 301px; border-right: 2px solid #f0f0f0; padding-top: 28px; display: flex; flex-direction: column; gap: 14px; flex: none; }
.nav-item { display: flex; align-items: center; height: 42px; width: 296px; padding-left: 39px; color: #111; white-space: nowrap; }
.nav-ic { width: 30px; height: 26px; margin-right: 3px; }
.nav-sel { background: #d9d9d9; }
.list { margin-left: 27px; width: 1190px; }
.list-head { display: flex; height: 45px; color: #4c607a; line-height: 44px; }
.h-name { width: 794px; padding-left: 4px; display: flex; }
.sort { width: 12px; height: 7px; margin: 5px 0 0 200px; }
.h-type { width: 236px; padding-left: 10px; border-left: 2px solid #e5e5e5; }
.h-size { width: 158px; padding-left: 10px; border-left: 2px solid #e5e5e5; border-right: 2px solid #e5e5e5; }
.rows { padding-top: 13px; width: 1182px; }
.row { display: grid; grid-template-columns: 42px 763px 225px 152px; height: 37px; align-items: center; color: #111; padding-bottom: 2px; }
.row-sel { background: #cce8ff; box-shadow: inset 0 0 0 1.500px #99d1ff; }
.ric { display: flex; align-items: center; padding-left: 11px; }
.nm { letter-spacing: 0.33px; }
.f-ic { width: 17px; height: 24px; }
.d-ic { width: 19px; height: 26px; }
.ini-ic { width: 24px; height: 30px; margin-left: -5px; }
.bat-ic { width: 24px; height: 20px; margin-left: -2px; }
.ty { color: #6d6d6d; }
.sz { color: #6d6d6d; text-align: right; padding-right: 8px; letter-spacing: 0.33px; }

/* status bar */
.status { display: flex; height: 36px; color: #1e395b; line-height: 36px; padding-top: 2px; }
.st-a { margin-left: 22px; width: 110px; white-space: nowrap; border-right: 2px solid #f2f2f2; }
.st-b { margin-left: 18px; width: 142px; white-space: nowrap; }
.st-c { width: 101px; white-space: nowrap; border-right: 2px solid #f2f2f2; }
.views { display: flex; margin-left: auto; padding-right: 14px; margin-top: -2px; }
.view-details { width: 35px; height: 36px; background: #cde8f6; border: 2px solid #26a0da; border-bottom: 0; padding: 8px 6px; }
.view-details svg { width: 23px; height: 23px; }
.view-large { margin: 10px 0 0 7px; }
.view-large svg { width: 24px; height: 19px; }

/* context menu */
.menu { position: absolute; left: 585px; top: 284px; width: 504px; height: 1300px; background: #eee; border: 2px solid #a5a5a5; padding-top: 5px; color: #111; }
.mi { display: flex; align-items: center; height: 39px; white-space: nowrap; margin: 0 1px; padding-bottom: 2px; }
.mi-b { font-weight: 700; }
.mi-hot { background: #fbfbfb; }
.npp { letter-spacing: 0.7px; }
.ms { width: 56px; display: flex; justify-content: center; flex: none; }
.mic16 { width: 16px; height: 16px; }
.mic20 { width: 20px; height: 20px; }
.marrow { width: 13px; height: 24px; margin-left: auto; margin-right: 15px; }
.msep { height: 12px; margin: 0 15px; background: linear-gradient(#a0a0a0, #a0a0a0) no-repeat 0 5px / 100% 1px; }

/* overlays */
.redbox { position: absolute; left: 560px; top: 397px; width: 452px; height: 51px; border: 5px solid #ed1c24; }
.gauge { position: absolute; left: 2541px; top: 1418px; width: 15px; height: 90px; border: 3px solid #8a8a8a; border-radius: 8px; background: #fff; padding: 46px 2px 2px; }
.gauge-fill { height: 36px; background: linear-gradient(#9fd4ff, #3d8dff); border-radius: 0 0 4px 4px; }
```
